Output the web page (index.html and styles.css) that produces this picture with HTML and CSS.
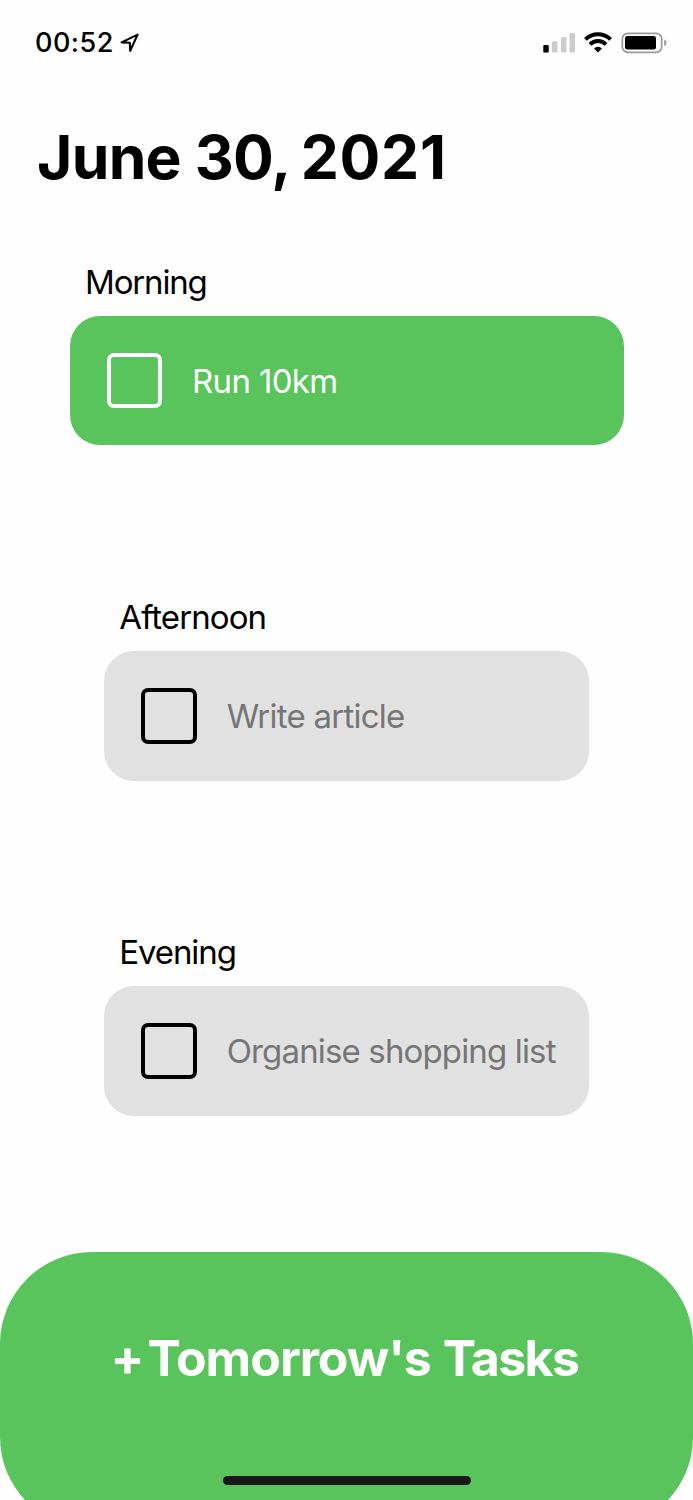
FILE: index.html
```
<!DOCTYPE html>
<html lang="en">
<head>
<meta charset="utf-8">
<title>Daily Tasks</title>
<link rel="stylesheet" href="styles.css">
</head>
<body>
<div class="screen">
  <header class="status">
    <div class="status-left">
      <span class="time">00:52</span>
      <svg class="location" width="20" height="20" viewBox="0 0 20 20"><path d="M1.6 9.4 17.6 1.6 10.2 17.8 9.8 9.7Z" fill="none" stroke="#000" stroke-width="2.1" stroke-linejoin="round"/></svg>
    </div>
    <svg class="status-icons" width="124" height="22" viewBox="0 0 124 22">
      <rect x="0.3" y="13" width="5.4" height="7.6" rx="1.2"/>
      <g fill="#ccc">
        <rect x="9" y="9.3" width="5.4" height="11.3" rx="1.2"/>
        <rect x="18" y="5" width="5.4" height="15.6" rx="1.2"/>
        <rect x="26.6" y="1" width="5.4" height="19.6" rx="1.2"/>
      </g>
      <g fill="none" stroke="#000" stroke-width="4">
        <path d="M42.4 7.4a18 18 0 0 1 25.2 0"/>
        <path d="M47 12.4a11.4 11.4 0 0 1 16 0"/>
      </g>
      <path d="M51 16.4a6 6 0 0 1 8 0L55 20.4Z"/>
      <rect x="79.3" y="1.3" width="39.4" height="19" rx="5.6" fill="none" stroke="#999" stroke-width="1.7"/>
      <rect x="82" y="4" width="31" height="13.6" rx="2.4"/>
      <path d="M121.2 7.4c3 1.3 3 5.5 0 6.8Z" fill="#999"/>
    </svg>
  </header>
  <h1 class="date"><span class="month">June</span> <span class="day">30,</span> <span class="year">2021</span></h1>
  <main class="sections">
    <section class="section section-active">
      <h2 class="label label-morning">Morning</h2>
      <div class="card"><span class="checkbox"></span><span class="task task-run">Run 10km</span></div>
    </section>
    <section class="section">
      <h2 class="label label-afternoon">Afternoon</h2>
      <div class="card"><span class="checkbox"></span><span class="task task-write">Write article</span></div>
    </section>
    <section class="section">
      <h2 class="label label-evening">Evening</h2>
      <div class="card"><span class="checkbox"></span><span class="task task-shop">Organise shopping list</span></div>
    </section>
  </main>
  <footer class="tomorrow">
    <span class="tomorrow-text"><span class="plus">+</span><span class="day-name">Tomorrow's</span> <span class="noun">Tasks</span></span>
    <span class="home-bar"></span>
  </footer>
</div>
</body>
</html>
```
FILE: styles.css
```
* { box-sizing: border-box; }
body { margin: 0; background: #fefefe; font-family: Inter, "Liberation Sans", sans-serif; color: #000; }
.screen { width: 693px; height: 1500px; overflow: hidden; display: flex; flex-direction: column; white-space: nowrap; }
.status { display: flex; justify-content: space-between; align-items: flex-start; height: 121px; flex: none; padding: 27px 26px 0 35px; }
.status-left { display: flex; gap: 6px; }
.time { font-size: 27px; line-height: 32px; font-weight: 500; letter-spacing: 0.5px; }
.location { margin-top: 6px; }
.status-icons { margin-top: 5px; }
.date { margin: 0; padding-left: 37px; height: 141px; flex: none; font-size: 60.5px; line-height: 73px; font-weight: 700; word-spacing: -0.6px; }
.month, .day { letter-spacing: -0.7px; }
.day { margin-right: -3.8px; }
.year { letter-spacing: 0.7px; }
.sections { flex: none; height: 990px; display: flex; flex-direction: column; }
.section { height: 335px; flex: none; padding: 0 104.3px; }
.section-active { padding: 0 69px 0 70px; }
.label { margin: 0 0 14.2px 15px; font-size: 33px; line-height: 40px; font-weight: 400; }
.label-morning { letter-spacing: -1.15px; }
.label-afternoon { letter-spacing: -0.92px; }
.label-evening { letter-spacing: -1.1px; }
.card { height: 129.4px; border-radius: 30px; background: #e1e1e1; color: #757575; display: flex; align-items: center; gap: 30px; padding-left: 37px; }
.checkbox { width: 55.4px; height: 55.4px; flex: none; border: 4px solid #000; border-radius: 7px; }
.section-active .card { height: 129px; background: #59c45c; color: #fff; }
.section-active .checkbox { width: 55px; height: 55px; border-color: #fff; }
.task { font-size: 33px; line-height: 40px; }
.task-run { letter-spacing: -0.65px; }
.task-write { letter-spacing: -0.76px; }
.task-shop { letter-spacing: -0.85px; }
.tomorrow { flex: none; height: 277px; border-radius: 92px; background: #59c45c; display: flex; flex-direction: column; align-items: center; padding-top: 76px; }
.tomorrow-text { padding-right: 4px; color: #fff; font-size: 50px; line-height: 60px; font-weight: 700; }
.plus { margin-right: 3px; }
.day-name { letter-spacing: -1px; }
.noun { letter-spacing: -1.6px; }
.home-bar { width: 248px; height: 9px; border-radius: 5px; background: #181818; margin-top: 88px; }
```
